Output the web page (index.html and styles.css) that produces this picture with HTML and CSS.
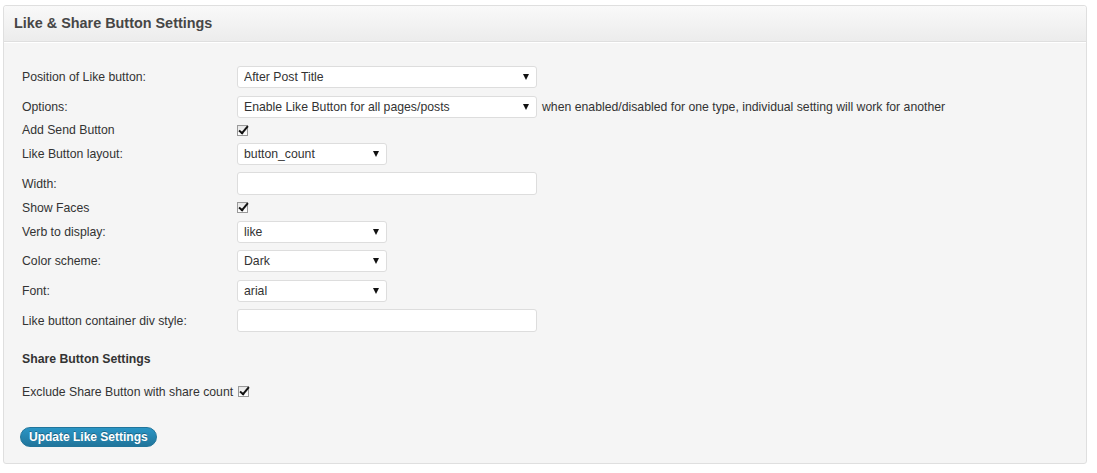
FILE: index.html
```html
<!DOCTYPE html>
<html>
<head>
	<title>Like &amp; Share Button Settings</title>
	<link rel="stylesheet" href="styles.css">
</head>
<body>
	<div class="postbox">
		<h3 class="hndle">Like &amp; Share Button Settings</h3>
		<div class="inside">
			<div class="form-table">
				<label>Position of Like button:</label>
				<div class="field">
					<span class="select wide"><select><option>After Post Title</option></select></span>
				</div>

				<label>Options:</label>
				<div class="field">
					<span class="select wide"><select><option>Enable Like Button for all pages/posts</option></select></span>
					<span class="desc">when enabled/disabled for one type, individual setting will work for another</span>
				</div>

				<label class="short">Add Send Button</label>
				<div class="field short"><span class="check"></span></div>

				<label>Like Button layout:</label>
				<div class="field">
					<span class="select"><select><option>button_count</option></select></span>
				</div>

				<label>Width:</label>
				<div class="field"><input type="text" class="text"></div>

				<label class="short">Show Faces</label>
				<div class="field short"><span class="check"></span></div>

				<label>Verb to display:</label>
				<div class="field">
					<span class="select"><select><option>like</option></select></span>
				</div>

				<label>Color scheme:</label>
				<div class="field">
					<span class="select"><select><option>Dark</option></select></span>
				</div>

				<label>Font:</label>
				<div class="field">
					<span class="select"><select><option>arial</option></select></span>
				</div>

				<label>Like button container div style:</label>
				<div class="field"><input type="text" class="text"></div>
			</div>

			<h4>Share Button Settings</h4>
			<p class="exclude">Exclude Share Button with share count <span class="check"></span></p>

			<button class="button-primary">Update Like Settings</button>
		</div>
	</div>
</body>
</html>
```

FILE: styles.css
```css
*{
	margin: 0;
	padding: 0;
	box-sizing: border-box;
}
body{
	margin: 5px 10px 0 3px;
	background: #fff;
	font-family: "Liberation Sans", Arial, sans-serif;
	font-size: 12.25px;
	color: #333;
}
.postbox{
	height: 459px;
	background: #f5f5f5;
	border: 1px solid #dfdfdf;
	border-radius: 3px;
	box-shadow: inset 0 1px 0 #fff;
}
.hndle{
	height: 36px;
	padding: 0 10px;
	line-height: 35px;
	font-size: 14.4px;
	font-weight: bold;
	color: #464646;
	background: linear-gradient(#f9f9f9, #ececec);
	border-bottom: 1px solid #dfdfdf;
	border-radius: 3px 3px 0 0;
}
.inside{
	padding: 19px 18px 0 18px;
	border-top: 1px solid #fff;
}
.form-table{
	display: grid;
	grid-template-columns: 215px 1fr;
}
.form-table label,
.field{
	height: 29.7px;
	display: flex;
	align-items: center;
}
.form-table .short{
	height: 18px;
}
.select{
	position: relative;
	display: inline-block;
	width: 150px;
}
.select.wide{
	width: 300px;
}
.select select{
	display: block;
	width: 100%;
	height: 22px;
	padding: 0 6px;
	appearance: none;
	-webkit-appearance: none;
	background: #fff;
	border: 1px solid #ddd;
	border-radius: 3px;
	font-family: inherit;
	font-size: 12.25px;
	color: #333;
	outline: none;
}
/* small black arrow in place of the native one */
.select:after{
	content: "";
	position: absolute;
	right: 8px;
	top: 8px;
	border-left: 3px solid transparent;
	border-right: 3px solid transparent;
	border-top: 6px solid #111;
	pointer-events: none;
}
.text{
	width: 300px;
	height: 23px;
	background: #fff;
	border: 1px solid #ddd;
	border-radius: 3px;
	outline: none;
}
.desc{
	margin-left: 5px;
}
.check{
	position: relative;
	display: inline-block;
	width: 11px;
	height: 11px;
	margin-left: 1px;
	border: 1px solid #999;
	background: linear-gradient(#e6e6e6, #fff);
	vertical-align: -1px;
}
.check:after{
	content: "";
	position: absolute;
	left: 3px;
	top: -2px;
	width: 3px;
	height: 8px;
	border-right: 2px solid #111;
	border-bottom: 2px solid #111;
	transform: rotate(40deg);
}
.field .check{
	margin-left: 0;
}
h4{
	margin: 16px 0 0 0;
	font-size: 12.25px;
	line-height: 14px;
	font-weight: bold;
	color: #333;
}
.exclude{
	margin-top: 17px;
	line-height: 18px;
}
.button-primary{
	margin: 26px 0 0 -2px;
	height: 20px;
	padding: 0 8px;
	font-family: inherit;
	font-size: 12px;
	font-weight: bold;
	color: #fff;
	text-shadow: 0 -1px 0 rgba(0,0,0,0.3);
	background: linear-gradient(#2a95c5, #21759b);
	border: 1px solid #21759b;
	border-radius: 11px;
	cursor: pointer;
}
```
